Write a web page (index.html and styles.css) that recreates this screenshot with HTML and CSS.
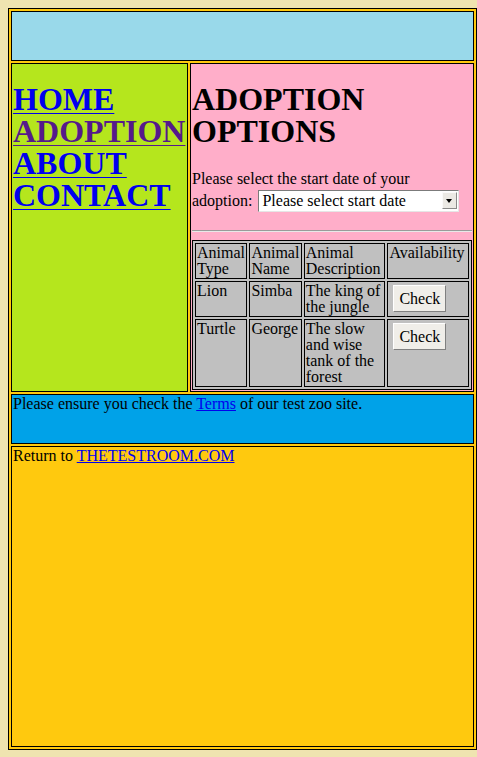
FILE: index.html
```html
<!DOCTYPE html>
<html lang="en">
<head>
<meta charset="utf-8">
<title>Adoption Options</title>
<link rel="stylesheet" href="styles.css">
</head>
<body>
<div class="page">
  <header class="banner"></header>
  <nav class="nav">
    <h1 class="nav-list">
      <a href="#">HOME</a>
      <a href="#" class="visited">ADOPTION</a>
      <a href="#">ABOUT</a>
      <a href="#">CONTACT</a>
    </h1>
  </nav>
  <main class="content">
    <h1 class="title">ADOPTION OPTIONS</h1>
    <p class="date-line">Please select the start date of your adoption: <span class="select-wrap"><select class="date-select"><option>Please select start date</option></select><span class="select-arrow"></span></span></p>
    <hr class="rule">
    <table class="animals">
      <colgroup>
        <col class="c-type"><col class="c-name"><col class="c-desc"><col class="c-avail">
      </colgroup>
      <tr>
        <td>Animal Type</td>
        <td>Animal Name</td>
        <td>Animal Description</td>
        <td>Availability</td>
      </tr>
      <tr>
        <td>Lion</td>
        <td>Simba</td>
        <td>The king of the jungle</td>
        <td><button class="check" type="button">Check</button></td>
      </tr>
      <tr>
        <td>Turtle</td>
        <td>George</td>
        <td>The slow and wise tank of the forest</td>
        <td><button class="check" type="button">Check</button></td>
      </tr>
    </table>
  </main>
  <section class="notice">Please ensure you check the <a href="#">Terms</a> of our test zoo site.</section>
  <footer class="bottom">Return to <a href="#">THETESTROOM.COM</a></footer>
</div>
</body>
</html>
```

FILE: styles.css
```css
html, body {
  background: #efe4b0;
}
body {
  margin: 8px 0 0 8px;
  font-family: "Liberation Serif", "Times New Roman", serif;
  font-size: 16px;
  line-height: 16px;
  color: #000;
}
a { color: #0000ee; }

.page {
  width: 469px;
  box-sizing: border-box;
  border: 1px solid #000;
  background: #ffc90e;
  padding: 2px;
  display: grid;
  grid-template-columns: 177px 284px;
  grid-template-rows: 50px auto 50px 301px;
  gap: 2px;
}
.page > * {
  border: 1px solid #000;
  padding: 1px;
  box-sizing: border-box;
  min-width: 0;
}
.banner {
  grid-column: 1 / 3;
  background: #99d9ea;
}
.nav {
  background: #b5e61d;
}
.nav-list {
  margin: 18px 0 0;
  font-size: 32px;
  line-height: 32px;
  font-weight: bold;
}
.nav-list a {
  display: block;
  text-decoration-thickness: 1px;
  text-underline-offset: 3px;
}
.nav-list a.visited { color: #551a8b; }

.content {
  background: #ffaec9;
}
.title {
  margin: 18px 0 24px;
  font-size: 32px;
  line-height: 32px;
  font-weight: bold;
}
.date-line {
  margin: 0 0 16px;
}
.select-wrap {
  display: inline-block;
  position: relative;
  width: 201px;
  height: 22px;
  margin: 3px 0 2px 2px;
  vertical-align: baseline;
}
.date-select {
  appearance: none;
  -webkit-appearance: none;
  width: 100%;
  height: 22px;
  box-sizing: border-box;
  margin: 0;
  padding: 0 18px 0 3px;
  border: 1px solid;
  border-color: #7b7b7b #e6e6e6 #e6e6e6 #7b7b7b;
  border-radius: 0;
  background: #fff;
  font-family: "Liberation Serif", "Times New Roman", serif;
  font-size: 16px;
  line-height: 20px;
  color: #000;
}
.select-arrow {
  position: absolute;
  right: 2px;
  top: 2px;
  width: 15px;
  height: 17px;
  box-sizing: border-box;
  background: #ebe9e4;
  border: 1px solid;
  border-color: #fafafa #8a8a8a #8a8a8a #fafafa;
  pointer-events: none;
}
.select-arrow::after {
  content: "";
  position: absolute;
  left: 3px;
  top: 6px;
  border-left: 3.5px solid transparent;
  border-right: 3.5px solid transparent;
  border-top: 4px solid #000;
}
.rule {
  margin: 0 0 8px;
  border: 0;
  border-top: 1px solid #9a9a9a;
  border-bottom: 1px solid #e8e8e8;
  height: 0;
}
.animals {
  width: 100%;
  table-layout: fixed;
  border-collapse: separate;
  border-spacing: 2px;
  border: 1px solid #000;
  background: #c0c0c0;
}
.c-type, .c-name { width: 52px; }
.c-desc, .c-avail { width: 81px; }
.animals td {
  border: 1px solid #000;
  padding: 1px;
  vertical-align: top;
  text-align: left;
  font-size: 16px;
  line-height: 16px;
  overflow: visible;
}
.check {
  display: block;
  margin: 2px 0 3px 4px;
  height: 27px;
  padding: 0 5px;
  box-sizing: border-box;
  border: 1px solid;
  border-color: #ffffff #808080 #808080 #ffffff;
  border-radius: 0;
  background: #f0eee9;
  font-family: "Liberation Serif", "Times New Roman", serif;
  font-size: 16px;
  color: #000;
}
.notice {
  grid-column: 1 / 3;
  background: #00a2e8;
}
.bottom {
  grid-column: 1 / 3;
  background: #ffc90e;
}
```
